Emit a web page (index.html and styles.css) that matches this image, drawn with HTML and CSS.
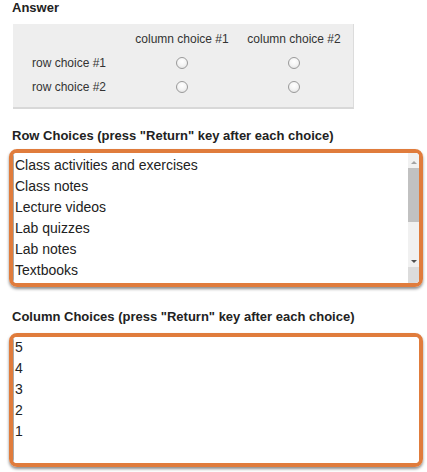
FILE: index.html
```html
<!DOCTYPE html>
<html>
<head>
<meta charset="utf-8">
<link rel="stylesheet" href="styles.css">
</head>
<body>
<div class="page">
  <div class="title answer-title">Answer</div>
  <div class="answer-box">
    <div class="grid">
      <div class="cell label"></div>
      <div class="cell head">column choice #1</div>
      <div class="cell head">column choice #2</div>
      <div class="cell label">row choice #1</div>
      <div class="cell"><span class="radio"></span></div>
      <div class="cell"><span class="radio"></span></div>
      <div class="cell label">row choice #2</div>
      <div class="cell"><span class="radio"></span></div>
      <div class="cell"><span class="radio"></span></div>
    </div>
  </div>

  <div class="title row-title">Row Choices (press "Return" key after each choice)</div>
  <div class="hl hl-row">
    <div class="field">
      <div class="lines">
        <div>Class activities and exercises</div>
        <div>Class notes</div>
        <div>Lecture videos</div>
        <div>Lab quizzes</div>
        <div>Lab notes</div>
        <div>Textbooks</div>
      </div>
      <div class="scrollbar">
        <div class="arrow up"></div>
        <div class="thumb"></div>
        <div class="track"></div>
        <div class="arrow down"></div>
        <div class="resizer"></div>
      </div>
    </div>
  </div>

  <div class="title col-title">Column Choices (press "Return" key after each choice)</div>
  <div class="hl hl-col">
    <div class="field">
      <div class="lines col-lines">
        <div>5</div>
        <div>4</div>
        <div>3</div>
        <div>2</div>
        <div>1</div>
      </div>
    </div>
  </div>
</div>
</body>
</html>
```

FILE: styles.css
```css
* { box-sizing: border-box; }
html, body { margin: 0; padding: 0; background: #fff; }
body { font-family: "Liberation Sans", Arial, sans-serif; color: #333; }
.page { width: 427px; height: 472px; overflow: hidden; }

.title {
  font-weight: bold;
  font-size: 13px;
  line-height: 16px;
  color: #222;
  margin-left: 12px;
}
.answer-title { padding-top: 0; }

.answer-box {
  margin: 8px 0 0 13px;
  width: 341px;
  height: 85px;
  background: #eeeeee;
  border-right: 1px solid #dcdcdc;
  border-bottom: 2px solid #d8d8d8;
  padding: 3px 0 0 19px;
}
.grid {
  display: grid;
  grid-template-columns: 94px 112px 112px;
  grid-auto-rows: 24px;
}
.cell {
  display: flex;
  align-items: center;
  justify-content: center;
  font-size: 12px;
  color: #333;
}
.cell.label { justify-content: flex-start; }
.radio {
  width: 12px;
  height: 12px;
  border-radius: 50%;
  border: 1px solid #9a9a9a;
  background: radial-gradient(circle at 50% 35%, #ffffff 0%, #f4f4f4 50%, #dcdcdc 100%);
}

.row-title { margin-top: 19px; }
.col-title { margin-top: 22px; }

.hl {
  margin-left: 9px;
  width: 414px;
  border: 4px solid #e07c3c;
  border-radius: 8px;
  box-shadow: 0 2px 3px rgba(0, 0, 0, 0.45);
  overflow: hidden;
}
.hl-row { margin-top: 5px; height: 138px; }
.hl-col { margin-top: 8px; height: 134px; }

.field {
  display: flex;
  height: 100%;
  background: #fff;
  border-left: 1px solid #a9a9a9;
}
.lines {
  flex: 1;
  padding: 2px 0 0 1px;
  font-size: 14px;
  line-height: 21px;
  color: #222;
}
.col-lines { padding-top: 0; }

.scrollbar {
  width: 11px;
  display: flex;
  flex-direction: column;
  background: #f1f1f1;
}
.arrow {
  height: 12px;
  display: flex;
  align-items: center;
  justify-content: center;
}
.arrow::before {
  content: "";
  width: 0;
  height: 0;
  border-left: 3px solid transparent;
  border-right: 3px solid transparent;
}
.arrow.up { margin-top: 3px; }
.arrow.up::before { border-bottom: 3px solid #a3a3a3; }
.arrow.down::before { border-top: 3px solid #505050; }
.thumb { height: 54px; background: #c1c1c1; }
.track { flex: 1; background: #f1f1f1; }
.resizer { height: 16px; background: #dcdcdc; }
```
